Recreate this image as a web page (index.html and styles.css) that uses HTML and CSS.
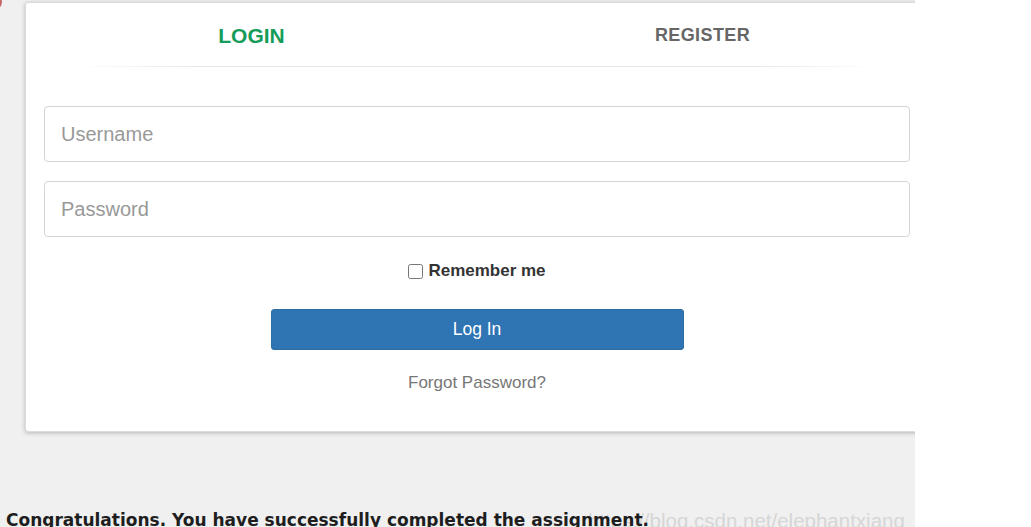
FILE: index.html
```html
<!DOCTYPE html>
<html>
<head>
<meta charset="utf-8">
<link rel="stylesheet" href="styles.css">
</head>
<body>
<div class="stage">
  <div class="card">
    <div class="tabs">
      <div class="tab tab-active">LOGIN</div>
      <div class="tab">REGISTER</div>
    </div>
    <div class="divider"></div>
    <form class="form">
      <input class="field" type="text" placeholder="Username">
      <input class="field" type="password" placeholder="Password">
      <label class="remember"><input type="checkbox" class="check"> Remember me</label>
      <button type="button" class="btn">Log In</button>
      <a class="forgot">Forgot Password?</a>
    </form>
  </div>
  <span class="watermark">https://blog.csdn.net/elephantxiang</span>
  <p class="congrats">Congratulations. You have successfully completed the assignment.</p>
</div>
</body>
</html>
```
FILE: styles.css
```css
html, body {
  margin: 0;
  padding: 0;
  background: #ffffff;
  font-family: "Liberation Sans", Arial, sans-serif;
}
.stage {
  position: relative;
  width: 915px;
  height: 527px;
  background: #f0f0f0;
  overflow: hidden;
  padding-top: 2px;
  box-sizing: border-box;
}
.stage::before {
  content: "";
  position: absolute;
  left: -14px;
  top: -6px;
  width: 16px;
  height: 16px;
  border-radius: 50%;
  border: 2px solid #c9686b;
  box-sizing: border-box;
}
.card {
  margin-left: 25px;
  width: 904px;
  height: 430px;
  background: #ffffff;
  border: 1px solid #dcdcdc;
  border-radius: 3px;
  box-shadow: 0 1px 4px rgba(0, 0, 0, 0.25);
  box-sizing: border-box;
}
.tabs {
  display: grid;
  grid-template-columns: 1fr 1fr;
  height: 63px;
  align-items: center;
}
.tab {
  text-align: center;
  font-weight: bold;
  font-size: 18px;
  letter-spacing: 0.4px;
  color: #666666;
  padding-top: 2px;
}
.tab-active {
  font-size: 21px;
  letter-spacing: 0;
  color: #169c5a;
  padding-top: 3px;
}
.divider {
  height: 1px;
  margin: 0 49px;
  background: linear-gradient(to right, rgba(230,230,230,0) 0%, #e8e8e8 15%, #e8e8e8 85%, rgba(230,230,230,0) 100%);
}
.form {
  display: flex;
  flex-direction: column;
  align-items: center;
  padding: 39px 18px 0;
}
.field {
  width: 100%;
  height: 56px;
  box-sizing: border-box;
  border: 1px solid #d4d4d4;
  border-radius: 4px;
  padding: 0 16px;
  font-family: "Liberation Sans", Arial, sans-serif;
  font-size: 20px;
  color: #555;
  margin-bottom: 19px;
  outline: none;
}
.field::placeholder {
  color: #999999;
}
.remember {
  display: flex;
  align-items: center;
  gap: 5px;
  margin-top: 5px;
  font-weight: bold;
  font-size: 17px;
  color: #333333;
}
.check {
  width: 15px;
  height: 15px;
  margin: 0;
}
.btn {
  margin-top: 28px;
  width: 413px;
  height: 41px;
  background: #2f74b3;
  border: 1px solid #2e6da4;
  border-radius: 3px;
  color: #ffffff;
  font-family: "Liberation Sans", Arial, sans-serif;
  font-size: 17.5px;
}
.forgot {
  margin-top: 23px;
  font-size: 17px;
  color: #777777;
}
.congrats {
  position: relative;
  margin: 78px 0 0 6px;
  font-family: "DejaVu Sans", Verdana, sans-serif;
  font-weight: bold;
  font-size: 17px;
  color: #1e1e1e;
  white-space: nowrap;
}
.watermark {
  position: absolute;
  left: 588px;
  top: 509px;
  font-size: 20.5px;
  color: #d6d6d6;
  white-space: nowrap;
}
```
